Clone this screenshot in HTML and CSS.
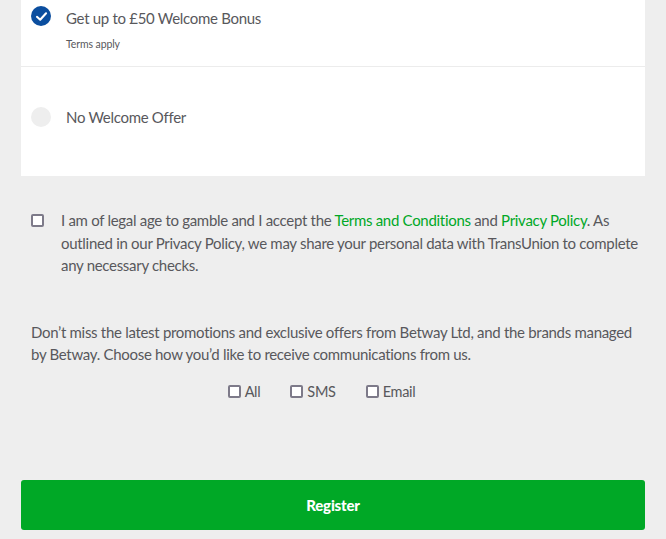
FILE: index.html
```html
<!DOCTYPE html>
<html lang="en">
<head>
    <meta charset="UTF-8">
    <title>Register</title>
    <link rel="stylesheet" href="styles.css">
</head>
<body>
    <div class="offers">
        <label class="offer offer-bonus">
            <span class="radio radio-checked">
                <svg viewBox="0 0 20 20" width="13" height="13"><path d="M3 10.5 L8 15 L17 5" fill="none" stroke="#fff" stroke-width="3.2" stroke-linecap="round" stroke-linejoin="round"/></svg>
            </span>
            <span class="offer-text">
                <span class="offer-title">Get up to £50 Welcome Bonus</span>
                <span class="offer-terms">Terms apply</span>
            </span>
        </label>
        <label class="offer offer-none">
            <span class="radio"></span>
            <span class="offer-title">No Welcome Offer</span>
        </label>
    </div>

    <div class="form-body">
        <label class="legal">
            <span class="box"></span>
            <span class="legal-text">I am of legal age to gamble and I accept the <a href="#">Terms and Conditions</a> and <a href="#">Privacy Policy</a>. As outlined in our Privacy Policy, we may share your personal data with TransUnion to complete any necessary checks.</span>
        </label>

        <p class="marketing">Don’t miss the latest promotions and exclusive offers from Betway Ltd, and the brands managed by Betway. Choose how you’d like to receive communications from us.</p>

        <div class="channels">
            <label class="channel"><span class="box"></span>All</label>
            <label class="channel"><span class="box"></span>SMS</label>
            <label class="channel"><span class="box"></span>Email</label>
        </div>
    </div>

    <div class="actions">
        <button class="register">Register</button>
    </div>
</body>
</html>
```

FILE: styles.css
```css
* {
    margin: 0;
    padding: 0;
    box-sizing: border-box;
}

body {
    font-family: 'Lato', 'Noto Sans', sans-serif;
    background: #eeeeee;
    color: #58585c;
    font-size: 15px;
    letter-spacing: -0.3px;
    width: 666px;
    height: 539px;
    overflow: hidden;
}

.offers {
    margin: 0 21px;
    background: #fff;
}

.offer {
    display: flex;
    padding-left: 10px;
}

.offer-bonus {
    height: 67px;
    padding-top: 6px;
    border-bottom: 1px solid #ececec;
}

.offer-none {
    height: 109px;
    padding-bottom: 9px;
    align-items: center;
}

.radio {
    flex: none;
    width: 20px;
    height: 20px;
    border-radius: 50%;
    background: #eeeeee;
    margin-right: 15px;
    display: flex;
    align-items: center;
    justify-content: center;
}

.radio-checked {
    background: #0b4e9f;
}

.offer-text {
    display: flex;
    flex-direction: column;
    padding-top: 2px;
}

.offer-title {
    font-size: 15px;
    line-height: 20px;
}

.offer-terms {
    font-size: 10.5px;
    line-height: 14px;
    margin-top: 9px;
    letter-spacing: -0.1px;
}

.form-body {
    padding: 33px 14px 0 31px;
}

.legal {
    display: flex;
    align-items: flex-start;
}

.legal .box {
    margin-top: 5px;
    margin-right: 17px;
}

.legal-text {
    line-height: 22.5px;
}

.legal-text a {
    color: #00a826;
    text-decoration: none;
}

.box {
    flex: none;
    display: inline-block;
    width: 13px;
    height: 13px;
    border: 2px solid #7d7a89;
    border-radius: 2px;
    background: #fff;
}

.marketing {
    margin-top: 44px;
    margin-right: 17px;
    line-height: 22px;
}

.channels {
    display: flex;
    justify-content: center;
    gap: 30px;
    margin-top: 17px;
    padding-right: 40px;
}

.channel {
    display: flex;
    align-items: center;
    gap: 4px;
    font-size: 14.5px;
    line-height: 20px;
}

.actions {
    padding: 0 21px;
    margin-top: 78px;
}

.register {
    display: block;
    width: 100%;
    height: 50px;
    border: none;
    border-radius: 3px;
    background: #00a826;
    color: #fff;
    font-family: 'Lato', sans-serif;
    font-weight: 900;
    font-size: 15px;
    letter-spacing: -0.2px;
}
```
